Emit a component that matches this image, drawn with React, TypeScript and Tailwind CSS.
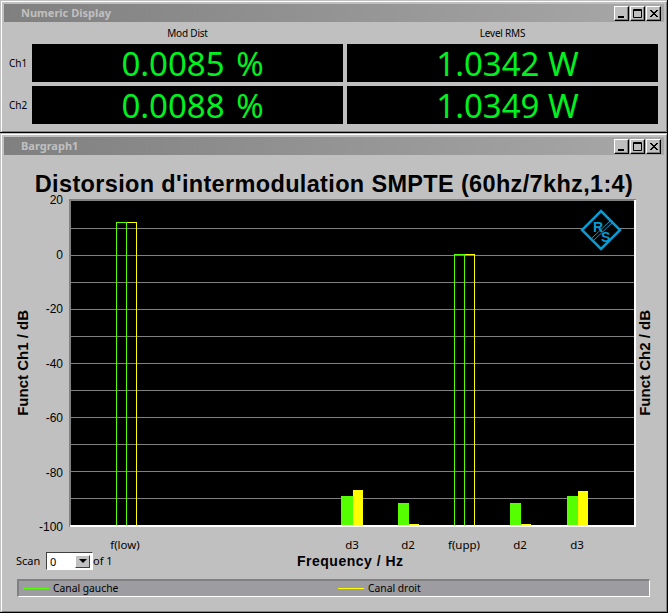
import React from "react";

const ticks = [20, 0, -20, -40, -60, -80, -100];
const grid = [228, 255, 282, 309, 336, 363, 390, 417, 444, 471, 498];

// x is the page pixel inside the plot, top is the page y of the bar head
const solidBars = [
  { x: 341, w: 12, top: 496, color: "#55ff00" },
  { x: 353, w: 10, top: 490, color: "#ffff00" },
  { x: 398, w: 11, top: 503, color: "#55ff00" },
  { x: 510, w: 11, top: 503, color: "#55ff00" },
  { x: 567, w: 11, top: 496, color: "#55ff00" },
  { x: 578, w: 10, top: 491, color: "#ffff00" },
];
const outlineBars = [
  { x: 126, top: 222, color: "#ffff00" },
  { x: 116, top: 222, color: "#55ff00" },
  { x: 464, top: 254, color: "#ffff00" },
  { x: 454, top: 254, color: "#55ff00" },
];
const xLabels = [
  { x: 125, label: "f(low)" },
  { x: 352, label: "d3" },
  { x: 408, label: "d2" },
  { x: 464, label: "f(upp)" },
  { x: 520, label: "d2" },
  { x: 577, label: "d3" },
];

const WinButton = ({ kind }: { kind: "min" | "max" | "close" }) => (
  <div className="w-[15px] h-[15px] bg-[#c0c0c0] border-t border-l border-white border-r border-b border-r-black border-b-black shadow-[inset_-1px_-1px_0_#808080] flex items-center justify-center">
    <svg width="11" height="11" viewBox="0 0 11 11" fill="none" stroke="black">
      {kind === "min" && <path d="M2 9h6" strokeWidth="2" />}
      {kind === "max" && <path d="M1.5 1.5h8v8h-8zM1.5 2.5h8" />}
      {kind === "close" && <path d="M2 2l7 7M3 2l7 7M9 2l-7 7M10 2l-7 7" strokeWidth="1" />}
    </svg>
  </div>
);

const Window = ({ title, className, children }: { title: string; className: string; children: React.ReactNode }) => (
  <div className={`pl-px pt-px border-r border-b border-black ${className}`}>
    <div className="h-full flex flex-col border-t border-l border-white border-r border-b border-r-[#808080] border-b-[#808080] p-[2px]">
      <div className="h-[18px] shrink-0 flex items-center pl-[17px] pr-[3px] bg-gradient-to-r from-[#808080] to-[#a8a8a8]">
        <span className="text-[11px] font-bold text-[#c0c0c0] font-['Noto_Sans',sans-serif]">{title}</span>
        <div className="ml-auto flex gap-px">
          <WinButton kind="min" />
          <WinButton kind="max" />
          <WinButton kind="close" />
        </div>
      </div>
      {children}
    </div>
  </div>
);

const Readout = ({ value, wide }: { value: string; wide?: boolean }) => (
  <div
    className={`h-[38px] bg-black flex items-center justify-center pl-[10px] text-[33px] leading-none text-[#00f020] font-['Noto_Sans',sans-serif] ${
      wide ? "[word-spacing:3px]" : ""
    }`}
  >
    {value}
  </div>
);

const RsLogo = () => (
  <g>
    <path d="M601 211L620 230L601 249L582 230Z" fill="black" stroke="#0a9ad2" strokeWidth="2.5" />
    <path d="M591 239L611 220M593 241L613 222" stroke="#0a9ad2" strokeWidth="1" />
    <text x="593" y="232" fontSize="14" fontWeight="bold" fill="#0a9ad2" fontFamily="Liberation Sans">R</text>
    <text x="601" y="242" fontSize="14" fontWeight="bold" fill="#0a9ad2" fontFamily="Liberation Sans">S</text>
  </g>
);

const Plot = () => (
  <svg width="567" height="328" viewBox="69 199 567 328" className="block">
    <rect x="69" y="199" width="567" height="328" fill="black" />
    <path d="M70 199v328M69 200h567" stroke="#808080" strokeWidth="2" />
    {grid.map((y) => (
      <path key={y} d={`M71 ${y + 0.5}H634`} stroke="#808080" />
    ))}
    {solidBars.map((b) => (
      <rect key={b.x} x={b.x} y={b.top} width={b.w} height={525 - b.top} fill={b.color} />
    ))}
    <path d="M409 524.5h10M521 524.5h10" stroke="#ffff00" />
    {outlineBars.map((b) => (
      <rect key={b.x} x={b.x + 0.5} y={b.top + 0.5} width="10" height={525 - b.top} fill="none" stroke={b.color} />
    ))}
    <RsLogo />
    <path d="M635 200v327M70 526h565" stroke="white" strokeWidth="2" />
  </svg>
);

export default function App() {
  return (
    <div className="w-[668px] h-[613px] bg-[#c0c0c0] overflow-hidden font-['Noto_Sans',sans-serif] text-black">
      <Window title="Numeric Display" className="h-[133px]">
        <div className="grid grid-cols-[23px_311px_311px] gap-x-1 gap-y-1 pl-[1px] pt-[4px]">
          <div />
          <div className="text-center text-[10px] leading-[14px] tracking-[-0.2px]">Mod Dist</div>
          <div className="text-center text-[10px] leading-[14px] tracking-[-0.2px]">Level RMS</div>
          <div className="text-[10px] self-center pl-[4px]">Ch1</div>
          <Readout value="0.0085 %" wide />
          <Readout value="1.0342 W" />
          <div className="text-[10px] self-center pl-[4px]">Ch2</div>
          <Readout value="0.0088 %" wide />
          <Readout value="1.0349 W" />
        </div>
      </Window>
      <Window title="Bargraph1" className="h-[480px]">
        <div className="h-[44px] flex items-start justify-center pt-[20px] text-[23.5px] leading-[18px] font-bold tracking-[0.34px] font-['Liberation_Sans',sans-serif] whitespace-nowrap">
          Distorsion d'intermodulation SMPTE (60hz/7khz,1:4)
        </div>
        <div className="flex h-[328px]">
          <div className="w-[14px] ml-[12px] flex items-center justify-center">
            <span className="[writing-mode:vertical-rl] rotate-180 text-[15px] leading-[14px] font-bold font-['Liberation_Sans',sans-serif] whitespace-nowrap">
              Funct Ch1 / dB
            </span>
          </div>
          <div className="w-[33px] -mt-[6px] -mb-[7px] flex flex-col justify-between items-end text-[12px] leading-[14px] font-['Liberation_Sans',sans-serif]">
            {ticks.map((t) => (
              <span key={t}>{t}</span>
            ))}
          </div>
          <div className="ml-[6px]">
            <Plot />
          </div>
          <div className="w-[14px] ml-[2px] flex items-center justify-center">
            <span className="[writing-mode:vertical-rl] rotate-180 text-[15px] leading-[14px] font-bold font-['Liberation_Sans',sans-serif] whitespace-nowrap">
              Funct Ch2 / dB
            </span>
          </div>
        </div>
        <div className="relative h-[25px] text-[11.5px]">
          {xLabels.map((l) => (
            <span
              key={l.x + l.label}
              className="absolute top-[11px] -translate-x-1/2 leading-[14px] whitespace-nowrap"
              style={{ left: l.x - 4 }}
            >
              {l.label}
            </span>
          ))}
        </div>
        <div className="flex items-end h-[18px] pl-[12px] text-[11px]">
          <span className="leading-[14px] pb-[2px] w-[30px]">Scan</span>
          <div className="w-[47px] h-[18px] bg-white border-t border-l border-[#404040] border-r border-b border-r-white border-b-white flex items-center pl-[3px] pr-[2px]">
            <span className="text-[11px] leading-none">0</span>
            <div className="ml-auto w-[15px] h-[13px] bg-[#c0c0c0] border-t border-l border-white border-r border-b border-r-[#404040] border-b-[#404040] flex items-center justify-center">
              <div className="w-0 h-0 border-l-[4px] border-r-[4px] border-t-[4px] border-l-transparent border-r-transparent border-t-black" />
            </div>
          </div>
          <span className="leading-[14px] pb-[2px] w-[204px]">of 1</span>
          <span className="text-[14px] leading-[20px] font-bold tracking-[0.5px] font-['Liberation_Sans',sans-serif] -mb-[3px] -translate-y-[2px]">
            Frequency / Hz
          </span>
        </div>
        <div className="ml-[13px] mt-[9px] w-[633px] h-[18px] bg-[#9d9ca1] border-t-2 border-l-2 border-[#808080] border-r border-b border-r-white border-b-white flex items-center text-[10.3px]">
          <span className="w-[26px] h-px ml-[4px] bg-[#55ff00]" />
          <span className="ml-[4px] w-[285px]">Canal gauche</span>
          <span className="w-[26px] h-px bg-[#ffff00]" />
          <span className="ml-[4px]">Canal droit</span>
        </div>
      </Window>
    </div>
  );
}
